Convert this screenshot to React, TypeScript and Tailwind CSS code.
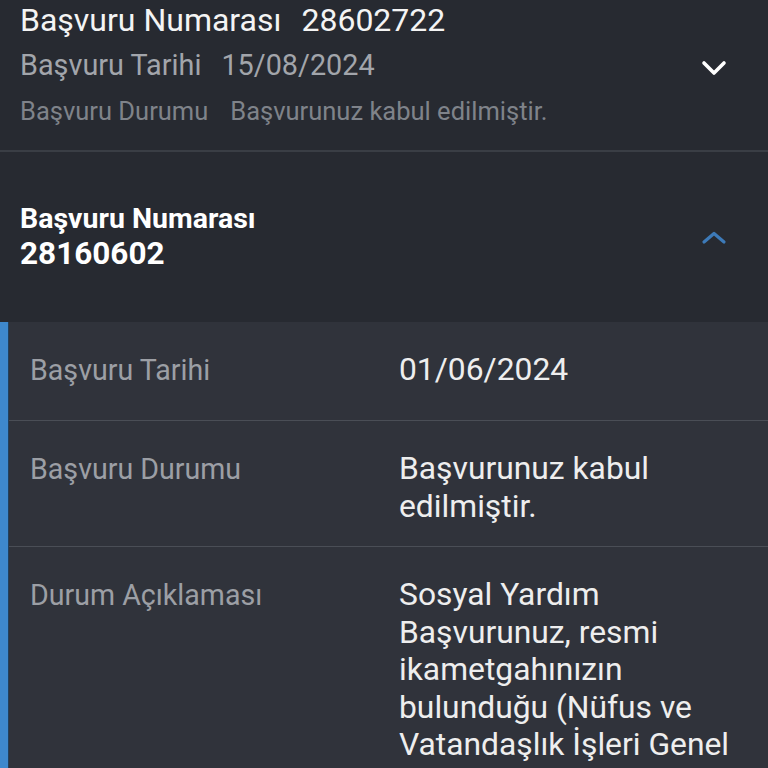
import React from 'react';

const font = { fontFamily: 'Roboto, "Noto Sans", sans-serif' };

const ChevronDown: React.FC<{ className?: string }> = ({ className }) => (
  <svg viewBox="0 0 26 18" className={className} fill="none" stroke="currentColor" strokeWidth={3.6} strokeLinecap="round" strokeLinejoin="round">
    <polyline points="3,4 13,14 23,4" />
  </svg>
);

const ChevronUp: React.FC<{ className?: string }> = ({ className }) => (
  <svg viewBox="0 0 26 14" className={className} fill="none" stroke="currentColor" strokeWidth={3.2} strokeLinecap="round" strokeLinejoin="round">
    <polyline points="3,11 13,2.5 23,11" />
  </svg>
);

interface DetailRow {
  label: string;
  value: string;
  minH: string;
}

const rows: DetailRow[] = [
  { label: 'Başvuru Tarihi', value: '01/06/2024', minH: 'min-h-[99px]' },
  { label: 'Başvuru Durumu', value: 'Başvurunuz kabul edilmiştir.', minH: 'min-h-[126px]' },
  {
    label: 'Durum Açıklaması',
    value:
      'Sosyal Yardım Başvurunuz, resmi ikametgahınızın bulunduğu (Nüfus ve Vatandaşlık İşleri Genel Müdürlüğü kayıtlarına göre) Sosyal Yardımlaşma ve Dayanışma Vakfına iletilmiştir.',
    minH: 'min-h-[98px]',
  },
];

export default function App() {
  return (
    <div className="w-[768px] h-[768px] overflow-hidden bg-[#272a31]" style={font}>
      {/* collapsed application */}
      <div className="flex items-center justify-between pl-[20px] pr-[41px] h-[152px] border-b-2 border-[#3a3e45]">
        <div className="flex flex-col self-start">
          <div className="flex gap-[20px] h-[40px] items-center text-[32px] text-[#f4f4f4]">
            <span>Başvuru Numarası</span>
            <span>28602722</span>
          </div>
          <div className="flex gap-[20px] h-[46px] mt-[3px] items-center text-[28.8px] text-[#a2a5ab]">
            <span>Başvuru Tarihi</span>
            <span>15/08/2024</span>
          </div>
          <div className="flex gap-[22px] h-[44px] items-center text-[25.5px] text-[#7f838a]">
            <span>Başvuru Durumu</span>
            <span>Başvurunuz kabul edilmiştir.</span>
          </div>
        </div>
        <ChevronDown className="w-[26px] h-[18px] text-white -mt-[14px]" />
      </div>

      {/* expanded application */}
      <div className="flex items-center justify-between pl-[20px] pr-[41px] h-[170px]">
        <div className="flex flex-col text-white font-bold -mt-[2px]">
          <span className="text-[28.5px] leading-[35px]">Başvuru Numarası</span>
          <span className="text-[31.5px] leading-[35px]">28160602</span>
        </div>
        <ChevronUp className="w-[26px] h-[14px] text-[#3d7ab8] mt-[2px]" />
      </div>

      <div className="flex bg-[#30333b]">
        <div className="w-[9px] shrink-0 bg-[#3e88cc] border-r border-[#22405c]" />
        <div className="flex-1 flex flex-col">
          {rows.map((row, i) => (
            <div
              key={row.label}
              className={`flex pt-[29px] pb-[21px] ${row.minH} ${i < rows.length - 1 ? 'border-b border-[#4a4e56]' : ''}`}
            >
              <div className="w-[390px] shrink-0 pl-[21px] text-[28.6px] leading-[38px] text-[#9c9fa5]">{row.label}</div>
              <div className="flex-1 pr-[20px] text-[31.8px] leading-[37.5px] text-[#eeeeee]">{row.value}</div>
            </div>
          ))}
        </div>
      </div>
    </div>
  );
}
